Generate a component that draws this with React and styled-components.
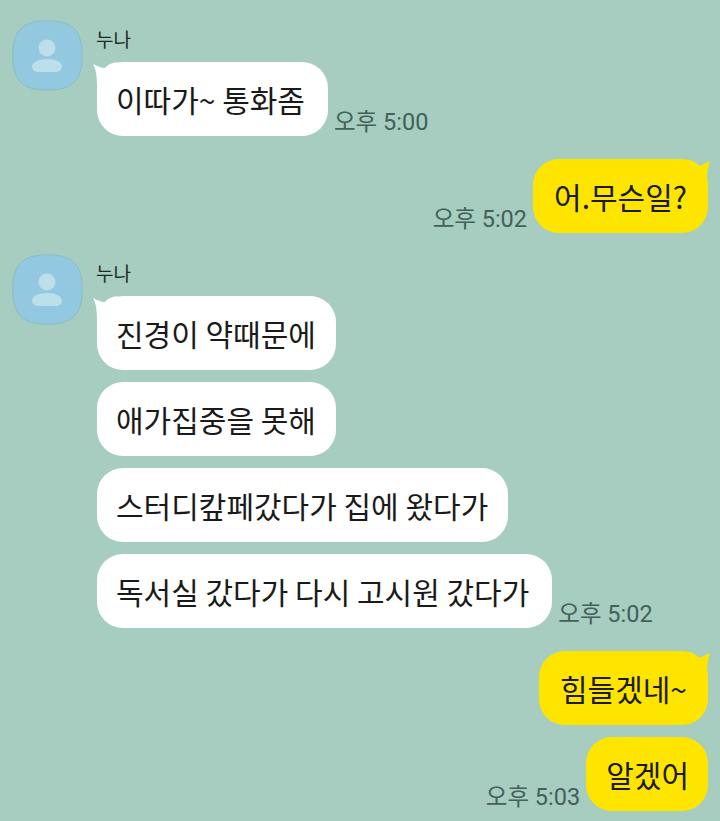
import React from 'react'
import styled, { createGlobalStyle } from 'styled-components'

const GlobalStyle = createGlobalStyle`
  html, body {
    margin: 0;
    padding: 0;
    background: #a6cdbf;
  }
  body {
    font-family: "Noto Sans CJK KR", "Noto Sans", sans-serif;
  }
`

const Avatar = () => (
  <AvatarBox>
    <svg width="71" height="71" viewBox="0 0 71 71">
      <path
        d="M35.500 .8C10 .8 .8 11 .8 35.500S10 70.200 35.500 70.200 70.200 60 70.200 35.500 61 .8 35.500 .8Z"
        fill="#93c9e0"
        stroke="#86bfc4"
        strokeWidth="1"
      />
      <circle cx="35" cy="28" r="8.500" fill="#bcdfea" />
      <path d="M20 46.500C20 42 27 39 35 39s15 3 15 7.500c0 3.500-3 5.500-6.500 5.500h-17C23 52 20 50 20 46.500Z" fill="#bcdfea" />
    </svg>
  </AvatarBox>
)

const Tail = ({ mine }) => (
  <TailMark $mine={mine} width="24" height="24" viewBox="0 0 24 24">
    {mine
      ? <path d="M0 1C5 1 9 3 12 7 15 6 18 4 23 2 21 8 20 14 20 24H0Z" fill="#fee500" />
      : <path d="M24 0C18 1 14 3 12 6 9 6 6 5 0 2 3 7 4 14 4 24H24Z" fill="#fff" />}
  </TailMark>
)

const Received = ({ name, lines, time }) => (
  <ReceivedRow>
    <Avatar />
    <ReceivedBody>
      <Name>{name}</Name>
      {lines.map(({ text, tight }, i) => (
        <BubbleRow key={text}>
          <Bubble $tight={tight}>
            {i === 0 && <Tail />}
            {text}
          </Bubble>
          {i === lines.length - 1 && <Time>{time}</Time>}
        </BubbleRow>
      ))}
    </ReceivedBody>
  </ReceivedRow>
)

const Sent = ({ lines }) => (
  <SentGroup>
    {lines.map(({ text, time, tight }, i) => (
      <BubbleRow key={text}>
        {time && <Time>{time}</Time>}
        <Bubble $mine $tight={tight}>
          {i === 0 && <Tail mine />}
          {text}
        </Bubble>
      </BubbleRow>
    ))}
  </SentGroup>
)

export default function App() {
  return (
    <>
      <GlobalStyle />
      <Screen>
        <Received name="누나" lines={[{ text: '이따가~ 통화좀' }]} time="오후 5:00" />
        <Sent lines={[{ text: '어.무슨일?', time: '오후 5:02' }]} />
        <Received
          name="누나"
          lines={[
            { text: '진경이 약때문에', tight: true },
            { text: '애가집중을 못해', tight: true },
            { text: '스터디캎페갔다가 집에 왔다가', tight: true },
            { text: '독서실 갔다가 다시 고시원 갔다가' },
          ]}
          time="오후 5:02"
        />
        <Sent lines={[{ text: '힘들겠네~' }, { text: '알겠어', time: '오후 5:03', tight: true }]} />
      </Screen>
    </>
  )
}

const Screen = styled.div`
  width: 720px;
  height: 821px;
  overflow: hidden;
  background: #a6cdbf;
  padding: 20px 12px 0;
  box-sizing: border-box;
  display: flex;
  flex-direction: column;
`

const ReceivedRow = styled.div`
  display: flex;
  gap: 14px;
  align-items: flex-start;
  margin-bottom: 23px;
`

const AvatarBox = styled.div`
  width: 71px;
  height: 71px;
  flex: none;
  svg {
    display: block;
  }
`

const ReceivedBody = styled.div`
  display: flex;
  flex-direction: column;
  align-items: flex-start;
  gap: 12px;
`

const Name = styled.div`
  font-size: 19px;
  line-height: 30px;
  height: 30px;
  margin: 4px 0 -4px -1px;
  color: #1f2a28;
`

const SentGroup = styled.div`
  display: flex;
  flex-direction: column;
  align-items: flex-end;
  gap: 12px;
  margin-bottom: 21px;
`

const BubbleRow = styled.div`
  display: flex;
  align-items: flex-end;
  gap: 6px;
`

const Bubble = styled.div`
  position: relative;
  height: 74px;
  line-height: 74px;
  padding-left: ${({ $mine, $tight }) => ($mine ? ($tight ? '20px' : '21px') : '19px')};
  padding-right: ${({ $mine, $tight }) => ($mine ? ($tight ? '19px' : '21px') : ($tight ? '20px' : '23px'))};
  border-radius: 26px;
  font-size: 30px;
  white-space: nowrap;
  color: #1a1a1a;
  background: ${({ $mine }) => ($mine ? '#fee500' : '#ffffff')};
`

const TailMark = styled.svg`
  position: absolute;
  top: 0;
  ${({ $mine }) => ($mine ? 'right: -3px;' : 'left: -4px;')}
`

const Time = styled.div`
  font-family: Roboto, "Noto Sans CJK KR", sans-serif;
  font-size: 23.5px;
  line-height: 28px;
  color: #43605a;
  white-space: nowrap;
`
